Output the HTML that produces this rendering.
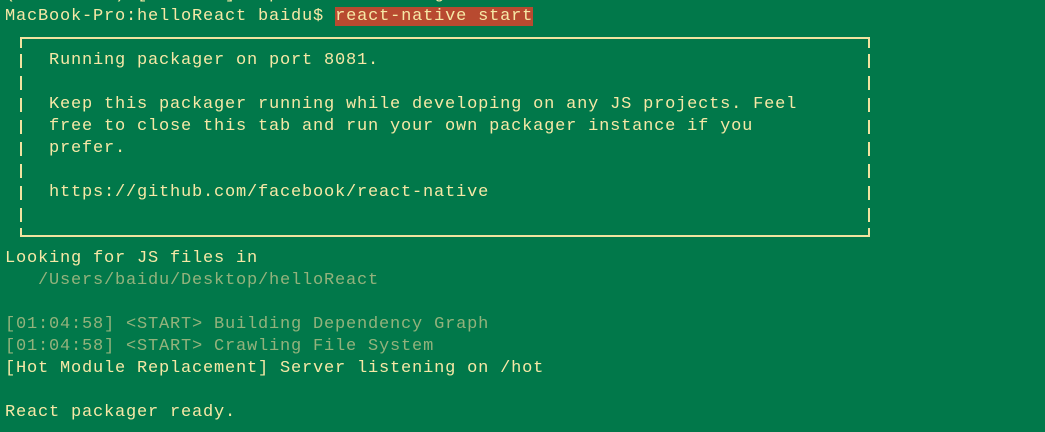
<!DOCTYPE html>
<html><head><meta charset="utf-8"><style>
body{margin:0;width:1045px;height:432px;overflow:hidden;background:#01784a;position:relative;font-family:"Liberation Mono",monospace;font-size:17px;color:#f6e8a6}
.l{position:absolute;left:5px;white-space:pre;letter-spacing:0.8px;height:22px;line-height:22px}
.d{color:#93b27c}
.hl{background:#b84a30}
.h{position:absolute;height:2px;background:#f1e3a0}
.v{position:absolute;width:2px;height:14px;background:#f1e3a0}
</style></head><body>
<div class="l" style="top:-16px">(node:xxxx) [DEP0005] DeprecationWarning</div>
<div class="l" style="top:6px">MacBook-Pro:helloReact baidu$ <span class="hl">react-native start</span></div>
<div class="h" style="left:20px;top:37px;width:850px"></div>
<div class="h" style="left:20px;top:235px;width:850px"></div>
<div class="l" style="top:50px;left:49px">Running packager on port 8081.</div>
<div class="l" style="top:94px;left:49px">Keep this packager running while developing on any JS projects. Feel</div>
<div class="l" style="top:116px;left:49px">free to close this tab and run your own packager instance if you</div>
<div class="l" style="top:138px;left:49px">prefer.</div>
<div class="l" style="top:182px;left:49px">https://github.com/facebook/react-native</div>
<div class="l" style="top:248px">Looking for JS files in</div>
<div class="l d" style="top:270px">   /Users/baidu/Desktop/helloReact</div>
<div class="l d" style="top:314px">[01:04:58] &lt;START&gt; Building Dependency Graph</div>
<div class="l d" style="top:336px">[01:04:58] &lt;START&gt; Crawling File System</div>
<div class="l" style="top:358px">[Hot Module Replacement] Server listening on /hot</div>
<div class="l" style="top:402px">React packager ready.</div>
<div class="v" style="left:20px;top:38px;height:10px"></div><div class="v" style="left:868px;top:38px;height:10px"></div>
<div class="v" style="left:20px;top:54px"></div><div class="v" style="left:868px;top:54px"></div>
<div class="v" style="left:20px;top:76px"></div><div class="v" style="left:868px;top:76px"></div>
<div class="v" style="left:20px;top:98px"></div><div class="v" style="left:868px;top:98px"></div>
<div class="v" style="left:20px;top:120px"></div><div class="v" style="left:868px;top:120px"></div>
<div class="v" style="left:20px;top:142px"></div><div class="v" style="left:868px;top:142px"></div>
<div class="v" style="left:20px;top:164px"></div><div class="v" style="left:868px;top:164px"></div>
<div class="v" style="left:20px;top:186px"></div><div class="v" style="left:868px;top:186px"></div>
<div class="v" style="left:20px;top:208px"></div><div class="v" style="left:868px;top:208px"></div>
<div class="v" style="left:20px;top:228px;height:8px"></div><div class="v" style="left:868px;top:228px;height:8px"></div>
</body></html>
